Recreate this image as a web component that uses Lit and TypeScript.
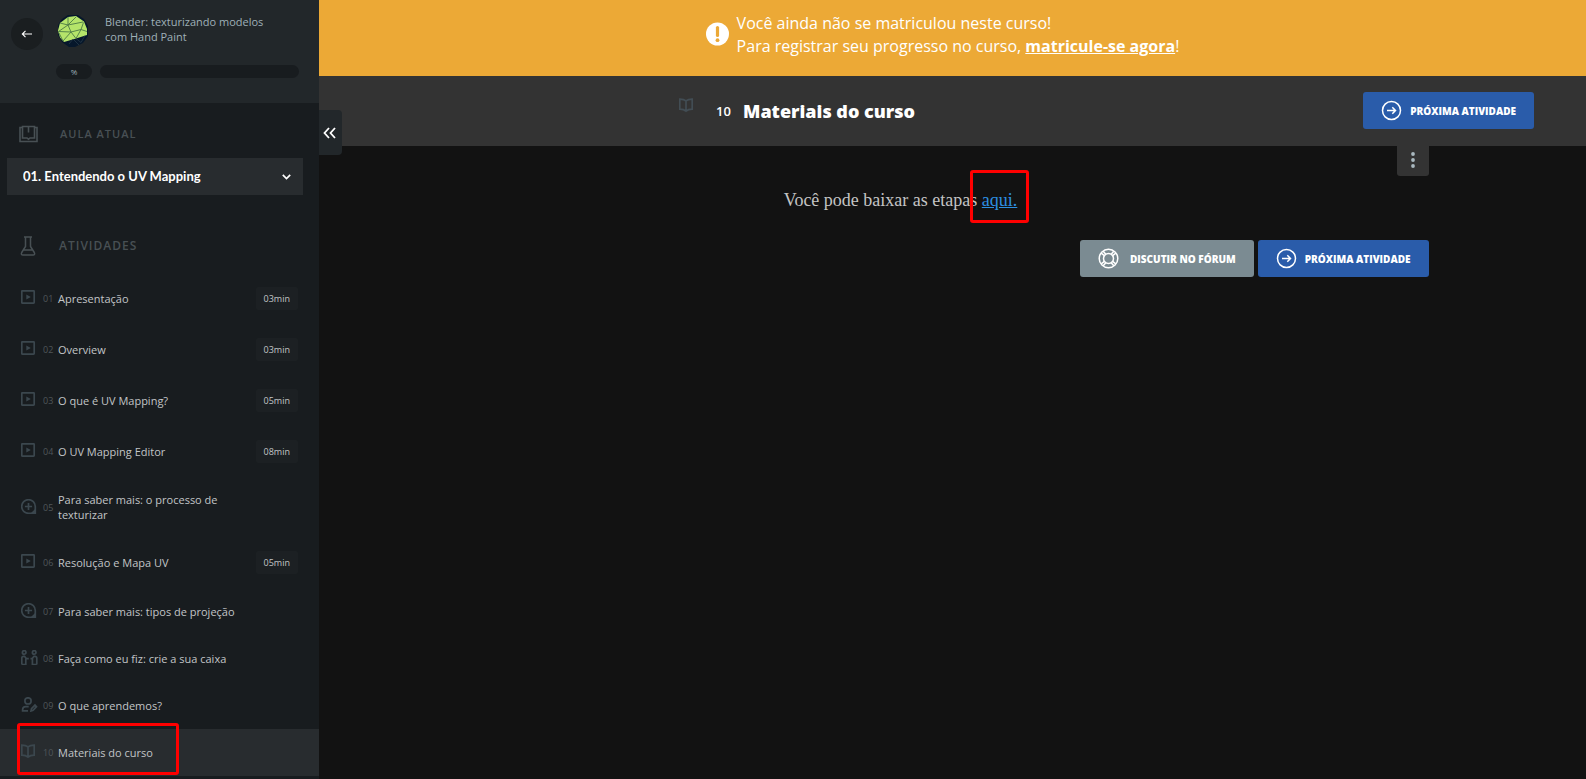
import { LitElement, html, svg, css } from "lit";
import { customElement, property } from "lit/decorators.js";

type Kind = "video" | "plus" | "people" | "learned" | "book";

interface Activity {
  num: string;
  title: string;
  kind: Kind;
  time?: string;
  active?: boolean;
}

const ACTIVITIES: Activity[] = [
  { num: "01", title: "Apresentação", kind: "video", time: "03min" },
  { num: "02", title: "Overview", kind: "video", time: "03min" },
  { num: "03", title: "O que é UV Mapping?", kind: "video", time: "05min" },
  { num: "04", title: "O UV Mapping Editor", kind: "video", time: "08min" },
  { num: "05", title: "Para saber mais: o processo de texturizar", kind: "plus" },
  { num: "06", title: "Resolução e Mapa UV", kind: "video", time: "05min" },
  { num: "07", title: "Para saber mais: tipos de projeção", kind: "plus" },
  { num: "08", title: "Faça como eu fiz: crie a sua caixa", kind: "people" },
  { num: "09", title: "O que aprendemos?", kind: "learned" },
  { num: "10", title: "Materiais do curso", kind: "book", active: true },
];

const KIND_ICONS = {
  video: svg`<rect x=".8" y=".8" width="12.400" height="12.400" rx="0.6"/><path d="M5.300 4.600v5L9.800 7.100z" fill="currentColor" stroke="none"/>`,
  plus: svg`<path d="M14 14.300H7.500a6.800 6.800 0 1 1 6.800-6.800V14.300z"/><path d="M7.500 3.900v7.200M3.900 7.500h7.200"/><path d="M14.600 9.500v5.100H9.500z" fill="currentColor" stroke="none"/>`,
  people: svg`<circle cx="3.200" cy="2.400" r="1.800"/><circle cx="13.200" cy="2.400" r="1.800"/><path d="M.8 14.500V8.200c0-1.100.7-1.900 1.800-1.900h.9l1.800 2.300h2.500M4.800 8.700v5.800H.8M15.800 14.500V8.200c0-1.100-.7-1.900-1.800-1.900h-1l-1.800 2.300H9.500M11.400 8.700v5.800h4.400"/>`,
  learned: svg`<circle cx="7" cy="3.900" r="3.100"/><path d="M7 13.900H1.600v-1.200c0-1.900 1.300-3.100 3.100-3.100h3"/><path d="M10 14l.5-2.300 3.500-3.600 1.500 1.600-3.400 3.600z"/>`,
  book: svg`<path d="M7 2.900C5.500 1.500 3 1.100.8 1.100v10.100c2.200 0 4.700.6 6.200 2 1.500-1.400 4-2 6.200-2V1.100C11 1.100 8.500 1.500 7 2.900zM7 2.900v10.300"/>`,
};

const kindIcon = (kind: Kind) => html`<svg class="kind" viewBox="0 0 17 15" width="17" height="15" aria-hidden="true"
  fill="none" stroke="currentColor" stroke-width="1.700">${KIND_ICONS[kind]}</svg>`;

@customElement("action-link")
class ActionLink extends LitElement {
  @property() label = "";
  @property() icon: "next" | "forum" = "next";

  static styles = css`
    :host { display: block; }
    .link {
      display: flex;
      align-items: center;
      gap: 8px;
      padding: 8px 18px;
      border-radius: 3px;
      background: #2a5caa;
      color: #fff;
      font: 800 10px/20px "Open Sans", sans-serif;
      text-decoration: none;
      text-transform: uppercase;
      white-space: nowrap;
    }
    .forum { background: #7b8b92; gap: 11px; }
    svg { display: block; }
  `;

  render() {
    const next = svg`<circle cx="10.500" cy="10.500" r="9"/><path d="M6 10.500h8.500M11.300 7.300l3.200 3.200-3.200 3.200"/>`;
    const forum = svg`<circle cx="10.500" cy="10.500" r="9.300"/><circle cx="10.500" cy="10.500" r="5"/>
      <path d="M3.200 5.200l3.200 2.500M5.200 3.200l2.600 3.100M17.800 5.200l-3.200 2.500M15.800 3.200l-2.600 3.100M3.200 15.800l3.200-2.500M5.200 17.800l2.600-3.100M17.800 15.800l-3.200-2.500M15.800 17.800l-2.600-3.100"/>`;
    return html`<a class="link ${this.icon}" href="#">
      <svg viewBox="0 0 21 21" width="21" height="21" fill="none" stroke="#fff" stroke-width="1.500" aria-hidden="true">
        ${this.icon === "forum" ? forum : next}
      </svg>${this.label}</a>`;
  }
}

@customElement("course-sidebar")
class CourseSidebar extends LitElement {
  static styles = css`
    :host {
      display: block;
      position: relative;
      background: #181c1f;
      color: #c2c5c7;
      font: 11px/15px "Open Sans", sans-serif;
    }
    .head {
      display: grid;
      grid-template-columns: 32px 1fr;
      gap: 13px;
      padding: 14px 20px 24px 11px;
      background: #22272a;
    }
    .back {
      display: grid;
      place-items: center;
      width: 32px;
      height: 32px;
      margin-top: 4px;
      border-radius: 50%;
      background: #1a1e20;
    }
    .course { display: flex; gap: 16px; color: #9fb0b8; }
    .course p { margin: 0; }
    .progress { display: flex; align-items: center; gap: 8px; margin-top: 17px; }
    .percent {
      width: 36px;
      border-radius: 8px;
      background: #181c1f;
      color: #9fb0b8;
      font-size: 8px;
      text-align: center;
    }
    .track { flex: 1; height: 13px; border-radius: 7px; background: #181c1f; }
    .logo { margin: 1px 0 0 1px; }
    h2 {
      display: flex;
      align-items: center;
      gap: 21px;
      margin: 0;
      padding: 21px 19px 14px;
      color: #485054;
      font: 600 11px/20px "Open Sans", sans-serif;
      letter-spacing: 1px;
      text-transform: uppercase;
    }
    .lesson { position: relative; margin: 0 16px 0 7px; }
    .lesson select {
      display: block;
      width: 100%;
      height: 37px;
      padding: 0 32px 1px 16px;
      border: 0;
      border-radius: 0;
      appearance: none;
      background: #282c2f;
      color: #fff;
      font: 700 13px/20px Lato, sans-serif;
    }
    .lesson svg { position: absolute; right: 12px; top: 16px; pointer-events: none; }
    .activities { padding: 41px 19px 17px; font-size: 12px; }
    ul { margin: 0; padding: 0; list-style: none; }
    .item {
      position: relative;
      display: flex;
      align-items: center;
      box-sizing: border-box;
      min-height: 47px;
      padding: 15px 21px;
      color: inherit;
      text-decoration: none;
    }
    .timed { padding: 14px 21px; }
    .active { background: #282c2f; }
    .kind { flex: none; width: 17px; margin: -1px 0 1px; color: #3b474e; }
    .num { flex: none; width: 15px; margin-left: 5px; color: #50565a; font-size: 9px; }
    .title { flex: 1; max-width: 190px; }
    .time {
      margin-left: auto;
      padding: 4px 8px;
      border-radius: 2px;
      background: #1c2023;
      font-size: 9px;
    }
    .mark {
      position: absolute;
      inset: -6px 140px 1px 17px;
      border: 3px solid #f00;
      border-radius: 3px;
      pointer-events: none;
    }
    .collapse {
      position: absolute;
      left: 100%;
      top: 110px;
      display: grid;
      place-items: center;
      width: 23px;
      height: 45px;
      padding: 0 2px 0 0;
      border: 0;
      border-radius: 0 4px 4px 0;
      background: #22272a;
    }
  `;

  render() {
    return html`
      <header class="head">
        <a class="back" href="#" aria-label="Voltar">
          <svg width="12" height="10" viewBox="0 0 12 10" fill="none" stroke="#fff" stroke-width="1.100" aria-hidden="true"><path d="M11 5H1.500M4.500 1.800L1.300 5 4.500 8.200"/></svg>
        </a>
        <div>
          <div class="course">
            <svg class="logo" width="32" height="32" viewBox="0 0 32 32" aria-hidden="true">
              <path d="M11 0h10l6 4 4 7v10l-5 7-8 4h-6l-7-5-4-7V10l4-6z" fill="#06172b"/>
              <path d="M11 2l8-1 8 5.500 3 7.500v6L19 23.500 7 27l-4-4.500L1 15.500 3 8z" fill="#b5e56a"/>
              <path d="M3 8l8 2L19 2M11 10l15-3M11 10L1.500 16.500M6 26l8-9-3-7M24 14.500L14 17l5 6.500 5-9 2.500-7M24 14.500l6 2M1.500 16.500L14 17M11 2v8M6 26l-4-8" fill="none" stroke="#4c7a45" stroke-width=".9"/>
              <path d="M12 29l4-5 6 6M19 23.500l5 4 4-7" fill="none" stroke="#2a3d4c" stroke-width=".7"/>
            </svg>
            <p>Blender: texturizando modelos<br />com Hand Paint</p>
          </div>
          <div class="progress"><span class="percent">%</span><span class="track"></span></div>
        </div>
      </header>

      <h2>
        <svg width="20" height="18" viewBox="0 0 20 18" fill="none" stroke="currentColor" stroke-width="1.600" aria-hidden="true">
          <path d="M3.500 2.500H1V16.500H18V2.500h-2.500M3.500 1.500H15.500V13h-4.500L9.500 14.300 8 13H3.500zM9.500 2v5.500"/>
        </svg>
        <label for="lesson">Aula atual</label>
      </h2>
      <div class="lesson">
        <select id="lesson"><option>01. Entendendo o UV Mapping</option></select>
        <svg width="9" height="6" viewBox="0 0 9 6" fill="none" stroke="#fff" stroke-width="1.700" aria-hidden="true"><path d="M.8.8l3.700 3.700L8.200.8"/></svg>
      </div>

      <h2 class="activities">
        <svg width="19" height="20" viewBox="0 0 19 20" fill="none" stroke="currentColor" stroke-width="1.500" aria-hidden="true">
          <path d="M5 1h8M6.500 1v9.500L2.700 16.500c-.8 1.400-.1 2.500 1.200 2.500h10.200c1.300 0 2-1.100 1.200-2.500L11.500 10.500V1M5 14h8"/>
        </svg>
        Atividades
      </h2>
      <ul>
        ${ACTIVITIES.map(
          (a) => html`<li>
            <a class="item ${a.time ? "timed" : ""} ${a.active ? "active" : ""}" href="#">
              ${kindIcon(a.kind)}
              <span class="num">${a.num}</span>
              <span class="title">${a.title}</span>
              ${a.time ? html`<span class="time">${a.time}</span>` : ""}
              ${a.active ? html`<span class="mark"></span>` : ""}
            </a>
          </li>`
        )}
      </ul>
      <button class="collapse" aria-label="Recolher menu">
        <svg width="13" height="12" viewBox="0 0 13 12" fill="none" stroke="#fff" stroke-width="1.800" aria-hidden="true"><path d="M6 1L1.500 6 6 11M12 1L7.500 6 12 11"/></svg>
      </button>
    `;
  }
}

@customElement("app-root")
class AppRoot extends LitElement {
  static styles = css`
    :host {
      display: grid;
      grid-template-columns: 319px minmax(0, 1fr);
      min-height: 100vh;
      background: #121212;
      font-family: "Open Sans", sans-serif;
    }
    course-sidebar { z-index: 1; }
    .banner {
      display: flex;
      align-items: center;
      justify-content: center;
      gap: 8px;
      padding: 12px 20px 18px 0;
      background: #eca936;
      color: #fff;
      font-size: 16px;
      font-weight: 500;
      line-height: 23px;
    }
    .banner p { margin: 0; }
    .banner svg { margin-bottom: 2px; }
    .banner a { color: inherit; font-weight: 700; }
    .bar {
      display: grid;
      grid-template-columns: 1fr auto;
      align-items: center;
      padding: 16px 52px 17px 0;
      background: #333;
      color: #fff;
    }
    h1 {
      display: flex;
      align-items: center;
      justify-content: center;
      margin: 0;
      padding-right: 88px;
      font-size: 18px;
      font-weight: 800;
      line-height: 24px;
    }
    .kind { width: 17px; margin: 0 20px 10px 0; color: #424d54; }
    .num { margin-right: 12px; font-size: 13px; font-weight: 600; }
    .content { max-width: 952px; margin: 0 auto; }
    .tools { display: flex; justify-content: flex-end; }
    .more {
      display: grid;
      place-items: center;
      width: 32px;
      height: 30px;
      padding: 0 0 2px;
      border: 0;
      border-radius: 0 0 3px 3px;
      background: #333;
    }
    .text {
      margin: 0;
      padding: 12px 104px 28px 0;
      color: #c4c4c4;
      font: 18px/24px "Liberation Serif", serif;
      text-align: center;
    }
    .text a { position: relative; color: #2d8fe0; }
    .mark {
      position: absolute;
      inset: -20px -12px -13px -12px;
      border: 3px solid #f00;
      border-radius: 3px;
      pointer-events: none;
    }
    .actions { display: flex; justify-content: flex-end; gap: 4px; }
  `;

  render() {
    return html`
      <course-sidebar></course-sidebar>
      <main>
        <div class="banner">
          <svg width="23" height="24" viewBox="0 0 23 24" aria-hidden="true">
            <circle cx="11.500" cy="12" r="11.500" fill="#fff"/>
            <path d="M11.500 5.500v8" stroke="#eca936" stroke-width="3.200" stroke-linecap="round"/>
            <circle cx="11.500" cy="18.200" r="1.900" fill="#eca936"/>
          </svg>
          <p>Você ainda não se matriculou neste curso!<br />Para registrar seu progresso no curso, <a href="#">matricule-se agora</a>!</p>
        </div>
        <header class="bar">
          <h1>${kindIcon("book")}<span class="num">10</span>Materiais do curso</h1>
          <action-link label="Próxima Atividade"></action-link>
        </header>
        <section class="content">
          <div class="tools">
            <button class="more" aria-label="Mais opções">
              <svg width="4" height="16" viewBox="0 0 4 16" fill="#a9b8bf" aria-hidden="true"><circle cx="2" cy="2" r="1.900"/><circle cx="2" cy="8" r="1.900"/><circle cx="2" cy="14" r="1.900"/></svg>
            </button>
          </div>
          <p class="text">Você pode baixar as etapas <a href="#">aqui.<span class="mark"></span></a></p>
          <div class="actions">
            <action-link icon="forum" label="Discutir no fórum"></action-link>
            <action-link label="Próxima Atividade"></action-link>
          </div>
        </section>
      </main>
    `;
  }
}
